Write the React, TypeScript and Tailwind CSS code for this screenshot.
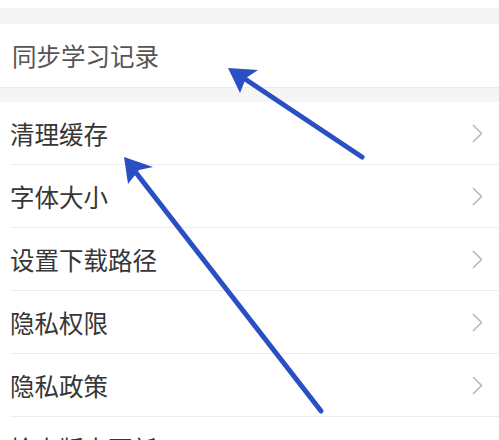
import React from 'react';

const rows = ['清理缓存', '字体大小', '设置下载路径', '隐私权限', '隐私政策', '检查版本更新'];

const Chevron = () => (
  <svg width="11" height="19" viewBox="0 0 11 19" fill="none" className="shrink-0">
    <path d="M1 1l8.5 8.5L1 18" stroke="#b9b9b9" strokeWidth="1.6" />
  </svg>
);

const Arrows = () => (
  <svg className="absolute inset-0 pointer-events-none" width="499" height="440" viewBox="0 0 499 440">
    <g stroke="#2a4fc4" strokeWidth="5" strokeLinecap="round" fill="none">
      <line x1="362" y1="157" x2="236" y2="73" />
      <line x1="321" y1="411" x2="130" y2="165" />
    </g>
    <g fill="#2a4fc4">
      <path d="M228 68 L258 70 L246 78 L240 93 Z" />
      <path d="M124 157 L153 167 L139 170 L128 184 Z" />
    </g>
  </svg>
);

export default function App() {
  return (
    <div
      className="relative w-[499px] h-[440px] overflow-hidden bg-[#f5f5f5]"
      style={{ fontFamily: '"Noto Sans CJK SC", "Noto Sans", sans-serif' }}
    >
      <div className="h-[8px] bg-white" />
      <div className="h-[16px]" />
      <div className="bg-white h-[64px] flex items-center pl-[12px] border-b border-[#ececec]">
        <span className="text-[24.5px] text-[#555555] leading-none pt-[2px]">同步学习记录</span>
      </div>
      <div className="h-[14px]" />
      <div className="bg-white">
        {rows.map((label) => (
          <div key={label} className="pl-[10px] h-[63px]">
            <div className="h-full flex items-center justify-between pr-[16px] border-b border-[#ededed]">
              <span className="text-[24.5px] text-[#363636] leading-none pt-[3px]">{label}</span>
              <Chevron />
            </div>
          </div>
        ))}
      </div>
      <Arrows />
    </div>
  );
}
